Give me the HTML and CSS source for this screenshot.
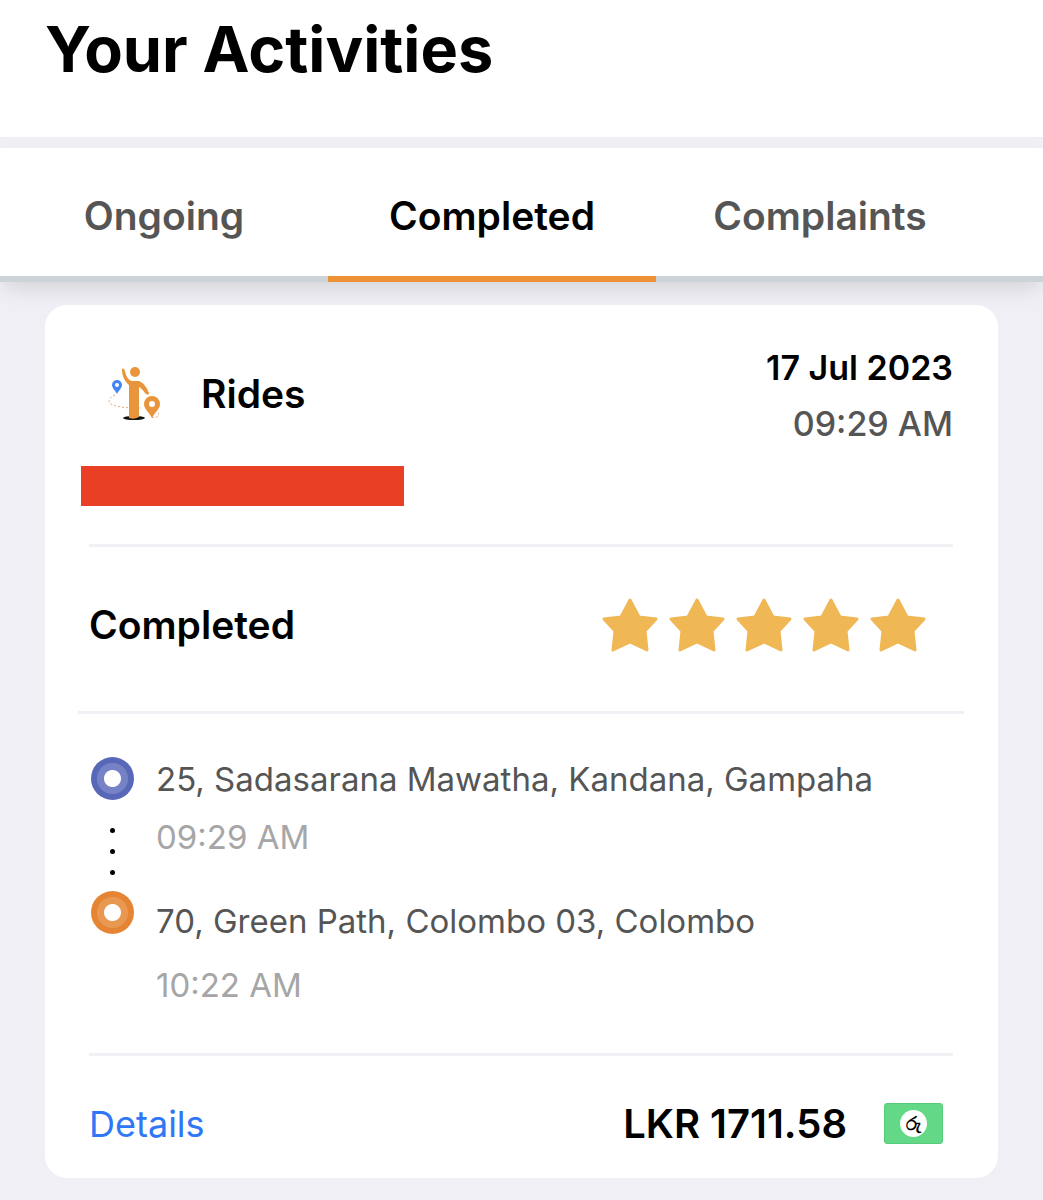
FILE: index.html
```html
<!DOCTYPE html>
<html lang="en">
<head>
    <meta charset="UTF-8">
    <meta name="viewport" content="width=device-width, initial-scale=1.0">
    <title>Your Activities</title>
    <link rel="stylesheet" href="styles.css">
</head>
<body>
    <header class="page-header">
        <h1>Your Activities</h1>
    </header>

    <!-- Tabs -->
    <nav class="tabs">
        <button type="button" class="tab">Ongoing</button>
        <button type="button" class="tab active">Completed</button>
        <button type="button" class="tab">Complaints</button>
    </nav>

    <main class="activities">
        <article class="card">
            <div class="card-top">
                <div class="service">
                    <svg class="service-icon" viewBox="0 0 54 56" aria-hidden="true">
                        <ellipse cx="26" cy="52" rx="11" ry="2" fill="#111"/>
                        <path d="M7 29C0 32-1 37 5 39C13 42 24 42 34 42M44 51C48 53 52 50 50 46" fill="none" stroke="#e3a57a" stroke-width="1" stroke-dasharray="2 2"/>
                        <circle cx="27" cy="6" r="5" fill="#e9953b"/>
                        <path d="M14 4C13 2 16 2 17 5C18 10 20 14 24 15L31 15C36 17 39 22 41 27C41 29 39 29 37 27C35 24 33 22 31 21V51Q26 54 21 52V19C17 16 14 10 14 4Z" fill="#e9953b"/>
                        <path d="M9 28C7 24 4 22 4 19A5 5 0 0 1 14 19C14 22 11 24 9 28Z" fill="#4285f4"/>
                        <circle cx="9" cy="19" r="2" fill="#fff"/>
                        <path d="M44 52C41 46 36 43 36 38A8 8 0 0 1 52 38C52 43 47 46 44 52Z" fill="#e9953b"/>
                        <circle cx="44" cy="38" r="3" fill="#fff"/>
                    </svg>
                    <h2>Rides</h2>
                </div>
                <div class="when">
                    <div class="date">17 Jul 2023</div>
                    <div class="time">09:29 AM</div>
                </div>
            </div>
            <div class="redacted"></div>

            <div class="status-row">
                <h3>Completed</h3>
                <div class="stars" role="img" aria-label="5 out of 5 stars">
                    <svg viewBox="0 0 56 56"><use href="#star"/></svg>
                    <svg viewBox="0 0 56 56"><use href="#star"/></svg>
                    <svg viewBox="0 0 56 56"><use href="#star"/></svg>
                    <svg viewBox="0 0 56 56"><use href="#star"/></svg>
                    <svg viewBox="0 0 56 56"><use href="#star"/></svg>
                </div>
            </div>

            <!-- Pickup and drop -->
            <div class="route">
                <div class="route-line">
                    <span class="stop pickup"></span>
                    <span class="dots"><i></i><i></i><i></i></span>
                    <span class="stop drop"></span>
                </div>
                <div class="places">
                    <p class="address">25, Sadasarana Mawatha, Kandana, Gampaha</p>
                    <p class="stop-time">09:29 AM</p>
                    <p class="address second">70, Green Path, Colombo 03, Colombo</p>
                    <p class="stop-time last">10:22 AM</p>
                </div>
            </div>

            <div class="card-bottom">
                <a href="#">Details</a>
                <div class="fare">
                    <span>LKR 1711.58</span>
                    <span class="cash"><span>රු</span></span>
                </div>
            </div>
        </article>
    </main>

    <svg class="symbols" aria-hidden="true">
        <symbol id="star" viewBox="0 0 56 56">
            <path d="M28 3L37 20L54 22L43 34L45 53L28 45L11 53L13 34L2 22L19 20Z" fill="#f0b755" stroke="#f0b755" stroke-width="3" stroke-linejoin="round"/>
        </symbol>
    </svg>
</body>
</html>
```
FILE: styles.css
```css
* {
    margin: 0;
    padding: 0;
    box-sizing: border-box;
}

body {
    font-family: Inter, "Liberation Sans", sans-serif;
    background: #f0eff5;
    color: #000;
    min-height: 100vh;
}

.page-header {
    background: #fff;
    padding: 9px 45px 48px;
    margin-bottom: 11px;
}

.page-header h1 {
    font-size: 63px;
    line-height: 80px;
    font-weight: 700;
}

.tabs {
    position: relative;
    display: grid;
    grid-template-columns: repeat(3, 1fr);
    padding-right: 59px;
    background: linear-gradient(#cdd4d9, #cdd4d9) bottom / 100% 6px no-repeat #fff;
    box-shadow: 0 10px 20px -4px rgba(0, 0, 0, 0.12);
}

.tab {
    height: 134px;
    border: none;
    border-bottom: 6px solid transparent;
    background: none;
    font-family: inherit;
    font-size: 39px;
    font-weight: 600;
    color: #555;
    cursor: pointer;
    padding-top: 6px;
}

.tab.active {
    color: #000;
    border-bottom-color: #ee9335;
}

.activities {
    padding: 23px 45px 22px;
}

.card {
    background: #fff;
    border-radius: 22px;
    padding: 35px 45px 29px 44px;
}

.card-top {
    display: flex;
    justify-content: space-between;
}

.service {
    display: flex;
    align-items: center;
    gap: 39px;
    height: 108px;
    padding-left: 19px;
}

.service-icon {
    width: 54px;
    height: 56px;
}

h2,
h3 {
    font-size: 39px;
    line-height: 48px;
    font-weight: 600;
}

.when {
    text-align: right;
    font-size: 34px;
    line-height: 56px;
}

.date {
    font-weight: 600;
}

.time {
    font-weight: 500;
    color: #555;
}

.redacted {
    width: 323px;
    height: 40px;
    margin: 14px 0 38px -8px;
    background: #e93f25;
}

.status-row {
    display: flex;
    justify-content: space-between;
    align-items: center;
    height: 167px;
    padding: 0 27px 8px 0;
    border-top: 3px solid #f0eff4;
}

.stars {
    display: flex;
    gap: 11px;
}

.stars svg {
    width: 56px;
    height: 56px;
}

.symbols {
    display: none;
}

.route {
    display: flex;
    gap: 22px;
    margin: 0 -11px;
    padding: 43px 13px 46px;
    border-top: 3px solid #f0eff4;
}

.route-line {
    display: flex;
    flex-direction: column;
    align-items: center;
}

.stop {
    width: 43px;
    height: 43px;
    border-radius: 50%;
}

.pickup {
    background: radial-gradient(circle, #fff 8px, #7682c6 9px, #7682c6 15px, #5867b8 16px);
}

.drop {
    background: radial-gradient(circle, #fff 8px, #e89850 9px, #e89850 15px, #e58432 16px);
}

.dots {
    display: flex;
    flex-direction: column;
    gap: 16px;
    padding: 28px 0 16px;
}

.dots i {
    width: 5px;
    height: 5px;
    border-radius: 50%;
    background: #000;
}

.address {
    font-size: 33px;
    line-height: 44px;
    color: #555;
}

.stop-time {
    margin-top: 14px;
    font-size: 33px;
    line-height: 44px;
    color: #a6a6a6;
}

.address.second {
    margin-top: 40px;
}

.stop-time.last {
    margin-top: 20px;
}

.card-bottom {
    display: flex;
    justify-content: space-between;
    align-items: center;
    height: 96px;
    padding: 42px 10px 0 0;
    border-top: 3px solid #f0eff4;
}

.card-bottom a {
    font-size: 36px;
    color: #2f77f6;
    text-decoration: none;
}

.fare {
    display: flex;
    align-items: center;
    gap: 37px;
    font-size: 40px;
    font-weight: 600;
}

.cash {
    display: flex;
    align-items: center;
    justify-content: center;
    width: 59px;
    height: 41px;
    border: 1px solid #56cc7a;
    border-radius: 3px;
    background: #63d987;
}

.cash span {
    width: 27px;
    height: 27px;
    border-radius: 50%;
    background: #fff;
    font-size: 18px;
    font-weight: 700;
    line-height: 27px;
    text-align: center;
}
```
